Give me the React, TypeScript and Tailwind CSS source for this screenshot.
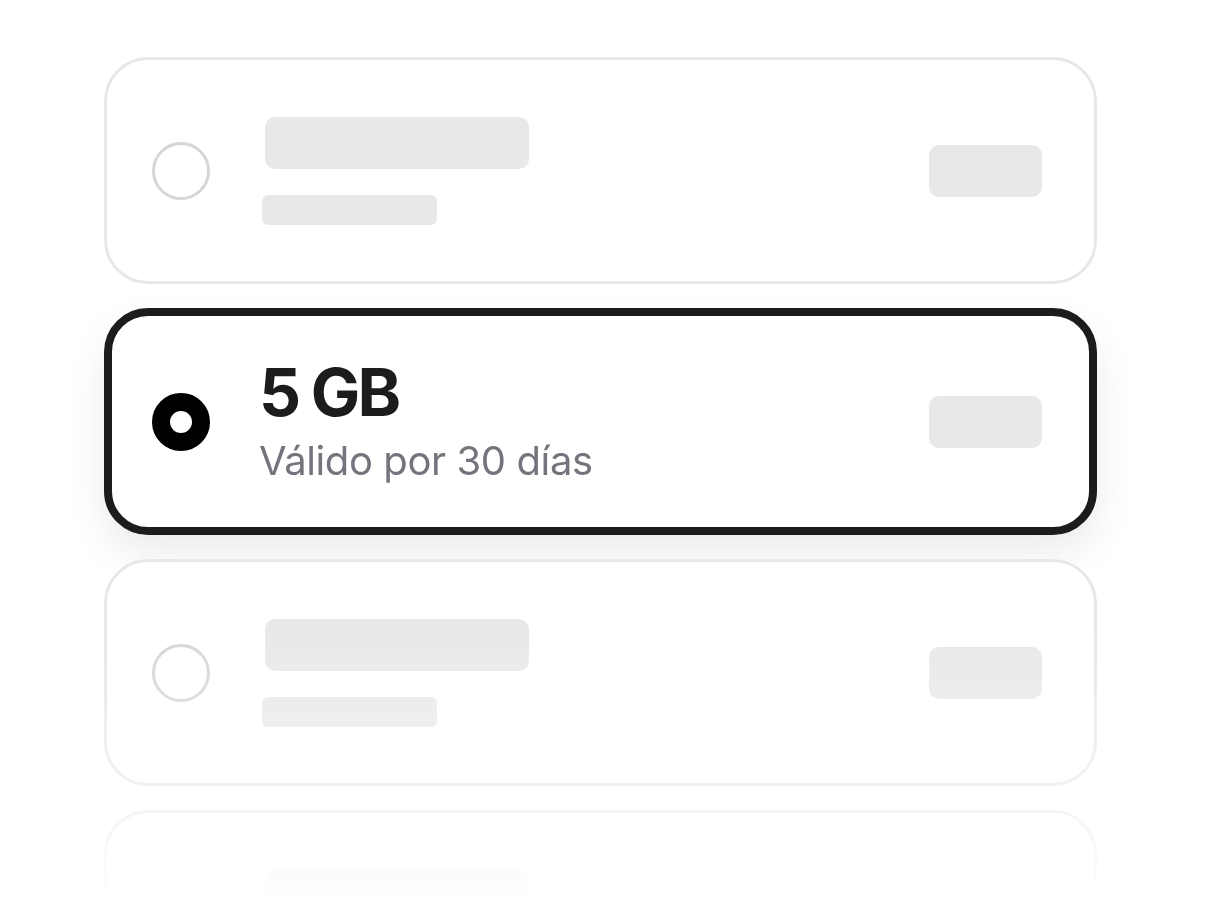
import React from "react";

interface Plan {
  id: string;
  title?: string;
  subtitle?: string;
  selected?: boolean;
}

const PLANS: Plan[] = [
  { id: "a" },
  { id: "b", title: "5 GB", subtitle: "Válido por 30 días", selected: true },
  { id: "c" },
  { id: "d" },
];

function Radio({ checked }: { checked?: boolean }) {
  return checked ? (
    <span className="box-border block h-[58px] w-[58px] shrink-0 rounded-full border-[18px] border-black bg-white" />
  ) : (
    <span className="box-border block h-[58px] w-[58px] shrink-0 rounded-full border-[3px] border-[#d6d6da] bg-white" />
  );
}

function PlanCard({ plan }: { plan: Plan }) {
  const selected = !!plan.selected;
  return (
    <div
      className={`box-border flex h-[227px] items-center rounded-[44px] bg-white ${
        selected
          ? "border-[8px] border-[#1c1c1e] pl-[40px] pr-[47px] shadow-[0_18px_40px_rgba(0,0,0,0.08)]"
          : "border-[3px] border-[#e7e7e7] pl-[45px] pr-[52px]"
      }`}
    >
      <Radio checked={selected} />
      <div className="ml-[52px] flex flex-1 flex-col">
        {plan.title ? (
          <>
            <div className="-ml-[3px] text-[66px] font-bold leading-[62px] tracking-[-0.045em] text-[#1c1c1e]">
              {plan.title}
            </div>
            <div className="-ml-[3px] mt-[16px] text-[40px] leading-[44px] tracking-[-0.01em] text-[#74747c]">
              {plan.subtitle}
            </div>
          </>
        ) : (
          <>
            <div className="ml-[3px] h-[52px] w-[264px] rounded-[10px] bg-[#e8e8e8]" />
            <div className="mt-[26px] h-[30px] w-[175px] rounded-[6px] bg-[#e8e8e8]" />
          </>
        )}
      </div>
      <div className="h-[52px] w-[113px] rounded-[10px] bg-[#e8e8e8]" />
    </div>
  );
}

export default function App() {
  return (
    <div
      className="h-[924px] w-[1208px] overflow-hidden bg-white pl-[64px] pt-[57px]"
      style={{ fontFamily: "Inter, 'Noto Sans', sans-serif" }}
    >
      <div className="flex w-[1073px] flex-col gap-[24px] px-[40px] [mask-image:linear-gradient(to_bottom,black_58%,rgba(0,0,0,0.5)_76%,transparent_86%)]">
        {PLANS.map((p) => (
          <PlanCard key={p.id} plan={p} />
        ))}
      </div>
    </div>
  );
}
